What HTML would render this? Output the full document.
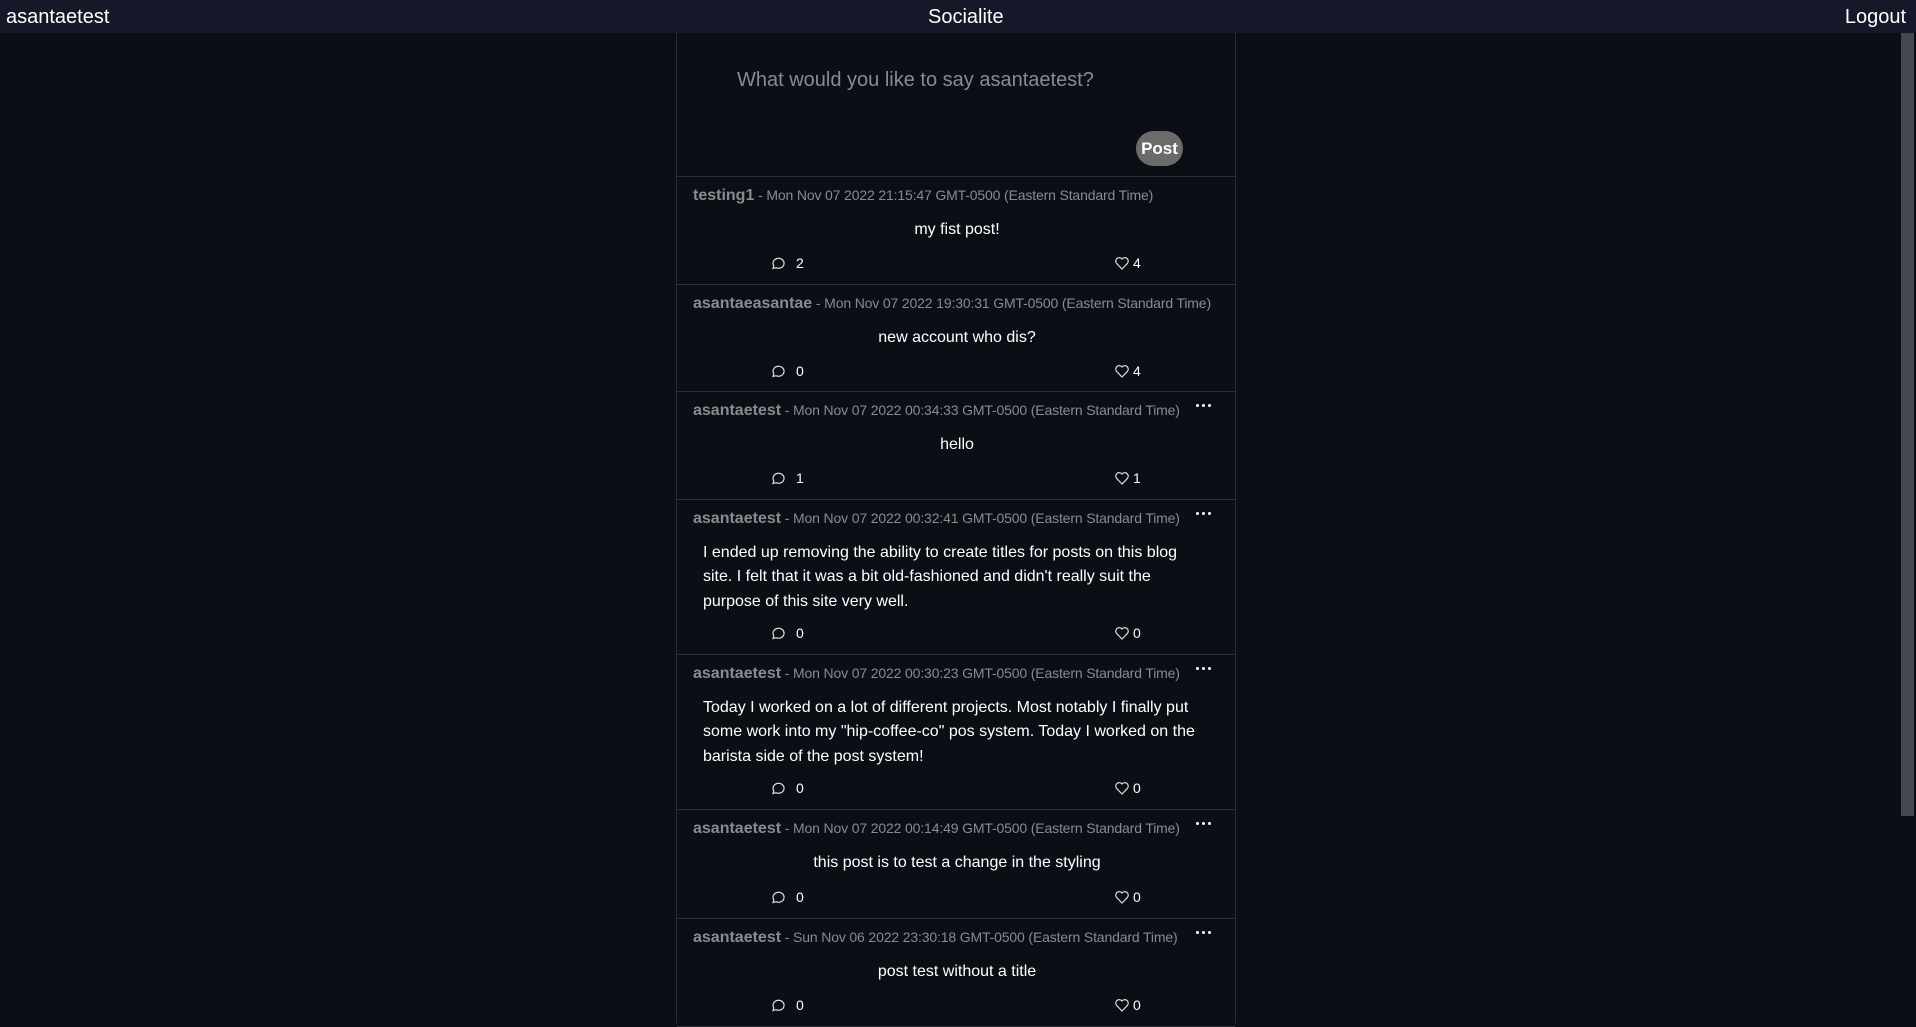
<!DOCTYPE html>
<html><head><meta charset="utf-8"><style>
*{margin:0;padding:0;box-sizing:border-box}
html,body{width:1916px;height:1007px;overflow:hidden;background:#0c0e16;font-family:"Liberation Sans",Arial,sans-serif;color:#fff}
.nav{position:absolute;left:0;top:0;width:1916px;height:33px;background:#141829;font-size:20px;z-index:2}
.nav span{position:absolute;top:6px}
.sb{position:absolute;left:1901px;top:0;width:13px;height:816px;background:#47474f;z-index:1}
.feed{position:absolute;left:676px;top:33px;width:560px;height:990px;border-left:1px solid #2a2d38;border-right:1px solid #2a2d38;background:#0c0e16}
.compose{height:144px;border-bottom:1px solid #2a2d38;position:relative}
.ph{position:absolute;left:60px;top:36px;font-size:20px;color:#8a8a8f}
.btn{position:absolute;left:459px;top:98px;width:47px;height:35px;border-radius:18px;background:#6b6b6b;font-weight:bold;font-size:17px;line-height:35px;text-align:center}
.post{position:relative;border-bottom:1px solid #2a2d38}
.hd{position:absolute;left:16px;top:10px;font-size:14px;color:#8a8a8f;letter-spacing:-0.15px}
.hd b{font-size:16px;letter-spacing:0}
.dots{position:absolute;left:519px;top:12px;width:16px;height:4px}
.dots i{position:absolute;top:0;width:3px;height:3px;border-radius:50%;background:#fff}
.body{position:absolute;left:0;width:560px;text-align:center;font-size:16px}
.ml{position:absolute;left:26px;width:500px;font-size:16px;line-height:24.4px}
.act{position:absolute;font-size:14px}
.act svg{position:absolute;left:0;top:0}
.c span{position:absolute;left:26px}
.h span{position:absolute;left:19px}
</style></head><body>
<div class="nav"><span style="left:6px">asantaetest</span><span style="left:928px">Socialite</span><span style="right:10px">Logout</span></div>
<div class="feed">
<div class="compose"><div class="ph">What would you like to say asantaetest?</div><div class="btn">Post</div></div>
<div class="post" style="height:108px"><div class="hd"><b>testing1</b> - Mon Nov 07 2022 21:15:47 GMT-0500 (Eastern Standard Time)</div><div class="body" style="top:44px">my fist post!</div>
<div class="act c" style="left:93px;top:78px"><svg width="16" height="16" viewBox="0 0 16 16"><path d="M3 13.5l.8-2.7A5.5 5 0 1 1 6 12.7z" fill="none" stroke="#ddd" stroke-width="1.2"/></svg><span>2</span></div>
<div class="act h" style="left:437px;top:78px"><svg width="16" height="16" viewBox="0 0 16 16"><path d="M8 14L2.5 8.3A3.3 3.3 0 0 1 8 4a3.3 3.3 0 0 1 5.5 4.3z" fill="none" stroke="#ddd" stroke-width="1.2"/></svg><span>4</span></div></div>
<div class="post" style="height:107px"><div class="hd"><b>asantaeasantae</b> - Mon Nov 07 2022 19:30:31 GMT-0500 (Eastern Standard Time)</div><div class="body" style="top:44px">new account who dis?</div>
<div class="act c" style="left:93px;top:78px"><svg width="16" height="16" viewBox="0 0 16 16"><path d="M3 13.5l.8-2.7A5.5 5 0 1 1 6 12.7z" fill="none" stroke="#ddd" stroke-width="1.2"/></svg><span>0</span></div>
<div class="act h" style="left:437px;top:78px"><svg width="16" height="16" viewBox="0 0 16 16"><path d="M8 14L2.5 8.3A3.3 3.3 0 0 1 8 4a3.3 3.3 0 0 1 5.5 4.3z" fill="none" stroke="#ddd" stroke-width="1.2"/></svg><span>4</span></div></div>
<div class="post" style="height:108px"><div class="hd"><b>asantaetest</b> - Mon Nov 07 2022 00:34:33 GMT-0500 (Eastern Standard Time)</div><div class="dots"><i style="left:0"></i><i style="left:6px"></i><i style="left:12px"></i></div><div class="body" style="top:44px">hello</div>
<div class="act c" style="left:93px;top:78px"><svg width="16" height="16" viewBox="0 0 16 16"><path d="M3 13.5l.8-2.7A5.5 5 0 1 1 6 12.7z" fill="none" stroke="#ddd" stroke-width="1.2"/></svg><span>1</span></div>
<div class="act h" style="left:437px;top:78px"><svg width="16" height="16" viewBox="0 0 16 16"><path d="M8 14L2.5 8.3A3.3 3.3 0 0 1 8 4a3.3 3.3 0 0 1 5.5 4.3z" fill="none" stroke="#ddd" stroke-width="1.2"/></svg><span>1</span></div></div>
<div class="post" style="height:155px"><div class="hd"><b>asantaetest</b> - Mon Nov 07 2022 00:32:41 GMT-0500 (Eastern Standard Time)</div><div class="dots"><i style="left:0"></i><i style="left:6px"></i><i style="left:12px"></i></div><div class="ml" style="top:41px">I ended up removing the ability to create titles for posts on this blog site. I felt that it was a bit old-fashioned and didn't really suit the purpose of this site very well.</div>
<div class="act c" style="left:93px;top:125px"><svg width="16" height="16" viewBox="0 0 16 16"><path d="M3 13.5l.8-2.7A5.5 5 0 1 1 6 12.7z" fill="none" stroke="#ddd" stroke-width="1.2"/></svg><span>0</span></div>
<div class="act h" style="left:437px;top:125px"><svg width="16" height="16" viewBox="0 0 16 16"><path d="M8 14L2.5 8.3A3.3 3.3 0 0 1 8 4a3.3 3.3 0 0 1 5.5 4.3z" fill="none" stroke="#ddd" stroke-width="1.2"/></svg><span>0</span></div></div>
<div class="post" style="height:155px"><div class="hd"><b>asantaetest</b> - Mon Nov 07 2022 00:30:23 GMT-0500 (Eastern Standard Time)</div><div class="dots"><i style="left:0"></i><i style="left:6px"></i><i style="left:12px"></i></div><div class="ml" style="top:41px">Today I worked on a lot of different projects. Most notably I finally put some work into my "hip-coffee-co" pos system. Today I worked on the barista side of the post system!</div>
<div class="act c" style="left:93px;top:125px"><svg width="16" height="16" viewBox="0 0 16 16"><path d="M3 13.5l.8-2.7A5.5 5 0 1 1 6 12.7z" fill="none" stroke="#ddd" stroke-width="1.2"/></svg><span>0</span></div>
<div class="act h" style="left:437px;top:125px"><svg width="16" height="16" viewBox="0 0 16 16"><path d="M8 14L2.5 8.3A3.3 3.3 0 0 1 8 4a3.3 3.3 0 0 1 5.5 4.3z" fill="none" stroke="#ddd" stroke-width="1.2"/></svg><span>0</span></div></div>
<div class="post" style="height:109px"><div class="hd"><b>asantaetest</b> - Mon Nov 07 2022 00:14:49 GMT-0500 (Eastern Standard Time)</div><div class="dots"><i style="left:0"></i><i style="left:6px"></i><i style="left:12px"></i></div><div class="body" style="top:44px">this post is to test a change in the styling</div>
<div class="act c" style="left:93px;top:79px"><svg width="16" height="16" viewBox="0 0 16 16"><path d="M3 13.5l.8-2.7A5.5 5 0 1 1 6 12.7z" fill="none" stroke="#ddd" stroke-width="1.2"/></svg><span>0</span></div>
<div class="act h" style="left:437px;top:79px"><svg width="16" height="16" viewBox="0 0 16 16"><path d="M8 14L2.5 8.3A3.3 3.3 0 0 1 8 4a3.3 3.3 0 0 1 5.5 4.3z" fill="none" stroke="#ddd" stroke-width="1.2"/></svg><span>0</span></div></div>
<div class="post" style="height:108px"><div class="hd"><b>asantaetest</b> - Sun Nov 06 2022 23:30:18 GMT-0500 (Eastern Standard Time)</div><div class="dots"><i style="left:0"></i><i style="left:6px"></i><i style="left:12px"></i></div><div class="body" style="top:44px">post test without a title</div>
<div class="act c" style="left:93px;top:78px"><svg width="16" height="16" viewBox="0 0 16 16"><path d="M3 13.5l.8-2.7A5.5 5 0 1 1 6 12.7z" fill="none" stroke="#ddd" stroke-width="1.2"/></svg><span>0</span></div>
<div class="act h" style="left:437px;top:78px"><svg width="16" height="16" viewBox="0 0 16 16"><path d="M8 14L2.5 8.3A3.3 3.3 0 0 1 8 4a3.3 3.3 0 0 1 5.5 4.3z" fill="none" stroke="#ddd" stroke-width="1.2"/></svg><span>0</span></div></div>
</div>
<div class="sb"></div>
</body></html>
